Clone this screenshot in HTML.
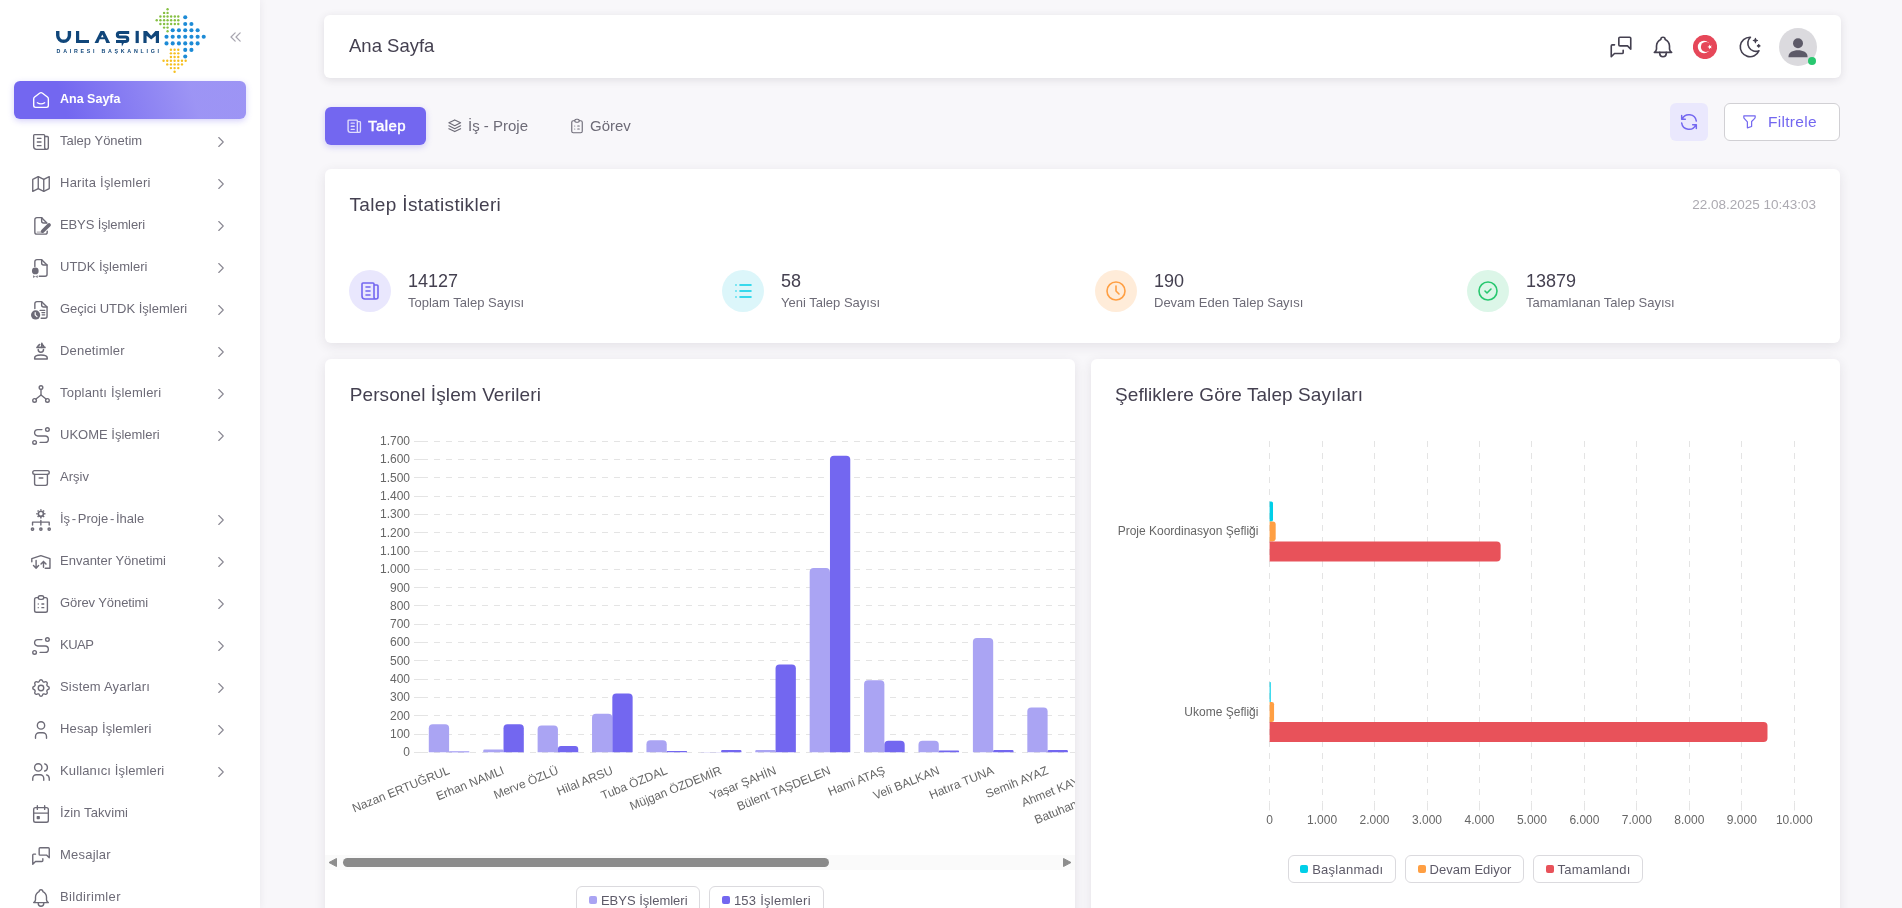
<!DOCTYPE html>
<html lang="tr">
<head>
<meta charset="utf-8">
<title>Ana Sayfa</title>
<style>
*{box-sizing:border-box;margin:0;padding:0}
html,body{width:1902px;height:908px;overflow:hidden;background:#f8f7fa;font-family:"Liberation Sans",sans-serif;color:#6d6b77}
.abs{position:absolute}
.t{position:absolute;white-space:nowrap}
svg{display:block}
.ic{position:absolute;fill:none;stroke-linecap:round;stroke-linejoin:round;overflow:visible}
.card{position:absolute;background:#fff;border-radius:6px;box-shadow:0 3px 12px rgba(47,43,61,.10)}
</style>
</head>
<body>
<div id="root" style="position:absolute;left:0;top:0;width:1902px;height:908px;overflow:hidden;will-change:transform;background:#f8f7fa">

<div class="abs" style="left:0;top:0;width:260px;height:908px;background:#fff;box-shadow:0 0 8px rgba(47,43,61,.08)"></div>
<svg class="abs" style="left:0;top:0" width="260" height="80" viewBox="0 0 260 80"><g fill="none" stroke="#10467a" stroke-linecap="butt" stroke-linejoin="miter"><path d="M57.75 30.9V35.5A5.825 5.825 0 0 0 69.4 35.5V30.9" stroke-width="3.4"/><path d="M77.6 30.9V41.5H89" stroke-width="3.2"/><path d="M129.2 32.5H119.6A2.25 2.25 0 0 0 119.6 37H125.5A2.2 2.2 0 0 1 125.5 41.45H116" stroke-width="3.1"/></g><g fill="#10467a"><path fill-rule="evenodd" d="M94.5 43.06L100.5 30.9H104.1L110.1 43.06H106.3L104.9 39.3H99.7L98.3 43.06ZM101 37.3H103.6L102.3 34.5Z"/><path d="M121.6 42.8H124L121.9 46.6Z"/><rect x="135.6" y="30.9" width="3.2" height="12.16"/><path d="M143.4 43.06V30.9H147L151.2 35.7L155.4 30.9H159V43.06H155.8V35.8L151.2 39.6L146.6 35.8V43.06Z"/></g><text x="56.6" y="53.2" font-family="Liberation Sans" font-weight="700" font-size="5.3" fill="#10467a" textLength="102.4" lengthAdjust="spacing">DAIRESI BAŞKANLIGI</text><circle cx="185.23" cy="17.30" r="2.05" fill="#1d8bd6"/><circle cx="185.23" cy="23.93" r="2.05" fill="#1d8bd6"/><circle cx="191.43" cy="23.93" r="2.05" fill="#1d8bd6"/><circle cx="172.71" cy="30.24" r="2.05" fill="#1d8bd6"/><circle cx="178.92" cy="30.24" r="2.05" fill="#1d8bd6"/><circle cx="185.23" cy="30.24" r="2.05" fill="#1d8bd6"/><circle cx="191.43" cy="30.24" r="2.05" fill="#1d8bd6"/><circle cx="197.63" cy="30.24" r="2.05" fill="#1d8bd6"/><circle cx="166.51" cy="36.76" r="2.05" fill="#1d8bd6"/><circle cx="172.71" cy="36.76" r="2.05" fill="#1d8bd6"/><circle cx="178.92" cy="36.76" r="2.05" fill="#1d8bd6"/><circle cx="185.23" cy="36.76" r="2.05" fill="#1d8bd6"/><circle cx="191.43" cy="36.76" r="2.05" fill="#1d8bd6"/><circle cx="197.63" cy="36.76" r="2.05" fill="#1d8bd6"/><circle cx="203.73" cy="36.76" r="2.05" fill="#1d8bd6"/><circle cx="166.51" cy="43.38" r="2.05" fill="#1d8bd6"/><circle cx="172.71" cy="43.38" r="2.05" fill="#1d8bd6"/><circle cx="178.92" cy="43.38" r="2.05" fill="#1d8bd6"/><circle cx="185.23" cy="43.38" r="2.05" fill="#1d8bd6"/><circle cx="191.43" cy="43.38" r="2.05" fill="#1d8bd6"/><circle cx="197.63" cy="43.38" r="2.05" fill="#1d8bd6"/><circle cx="185.23" cy="49.90" r="2.05" fill="#1d8bd6"/><circle cx="191.43" cy="49.90" r="2.05" fill="#1d8bd6"/><circle cx="185.23" cy="56.52" r="2.05" fill="#1d8bd6"/><circle cx="167.56" cy="9.21" r="1.2" fill="#86c043"/><circle cx="164.09" cy="12.89" r="1.2" fill="#86c043"/><circle cx="167.56" cy="12.89" r="1.2" fill="#86c043"/><circle cx="160.41" cy="16.57" r="1.2" fill="#86c043"/><circle cx="164.09" cy="16.57" r="1.2" fill="#86c043"/><circle cx="167.56" cy="16.57" r="1.2" fill="#86c043"/><circle cx="171.14" cy="16.57" r="1.2" fill="#86c043"/><circle cx="174.82" cy="16.57" r="1.2" fill="#86c043"/><circle cx="178.29" cy="16.57" r="1.2" fill="#86c043"/><circle cx="156.73" cy="20.25" r="1.2" fill="#86c043"/><circle cx="160.41" cy="20.25" r="1.2" fill="#86c043"/><circle cx="164.09" cy="20.25" r="1.2" fill="#86c043"/><circle cx="167.56" cy="20.25" r="1.2" fill="#86c043"/><circle cx="171.14" cy="20.25" r="1.2" fill="#86c043"/><circle cx="174.82" cy="20.25" r="1.2" fill="#86c043"/><circle cx="178.29" cy="20.25" r="1.2" fill="#86c043"/><circle cx="160.41" cy="23.93" r="1.2" fill="#86c043"/><circle cx="164.09" cy="23.93" r="1.2" fill="#86c043"/><circle cx="167.56" cy="23.93" r="1.2" fill="#86c043"/><circle cx="171.14" cy="23.93" r="1.2" fill="#86c043"/><circle cx="174.82" cy="23.93" r="1.2" fill="#86c043"/><circle cx="178.29" cy="23.93" r="1.2" fill="#86c043"/><circle cx="164.09" cy="27.61" r="1.2" fill="#86c043"/><circle cx="167.56" cy="27.61" r="1.2" fill="#86c043"/><circle cx="167.56" cy="31.29" r="1.2" fill="#86c043"/><circle cx="170.93" cy="49.69" r="1.2" fill="#f6bf1f"/><circle cx="174.61" cy="49.69" r="1.2" fill="#f6bf1f"/><circle cx="178.29" cy="49.69" r="1.2" fill="#f6bf1f"/><circle cx="170.93" cy="53.37" r="1.2" fill="#f6bf1f"/><circle cx="174.61" cy="53.37" r="1.2" fill="#f6bf1f"/><circle cx="178.29" cy="53.37" r="1.2" fill="#f6bf1f"/><circle cx="170.93" cy="57.05" r="1.2" fill="#f6bf1f"/><circle cx="174.61" cy="57.05" r="1.2" fill="#f6bf1f"/><circle cx="178.29" cy="57.05" r="1.2" fill="#f6bf1f"/><circle cx="163.56" cy="60.73" r="1.2" fill="#f6bf1f"/><circle cx="167.25" cy="60.73" r="1.2" fill="#f6bf1f"/><circle cx="170.93" cy="60.73" r="1.2" fill="#f6bf1f"/><circle cx="174.61" cy="60.73" r="1.2" fill="#f6bf1f"/><circle cx="178.29" cy="60.73" r="1.2" fill="#f6bf1f"/><circle cx="181.97" cy="60.73" r="1.2" fill="#f6bf1f"/><circle cx="185.65" cy="60.73" r="1.2" fill="#f6bf1f"/><circle cx="167.25" cy="64.41" r="1.2" fill="#f6bf1f"/><circle cx="170.93" cy="64.41" r="1.2" fill="#f6bf1f"/><circle cx="174.61" cy="64.41" r="1.2" fill="#f6bf1f"/><circle cx="178.29" cy="64.41" r="1.2" fill="#f6bf1f"/><circle cx="181.97" cy="64.41" r="1.2" fill="#f6bf1f"/><circle cx="170.93" cy="68.09" r="1.2" fill="#f6bf1f"/><circle cx="174.61" cy="68.09" r="1.2" fill="#f6bf1f"/><circle cx="178.29" cy="68.09" r="1.2" fill="#f6bf1f"/><circle cx="174.61" cy="71.77" r="1.2" fill="#f6bf1f"/></svg>
<svg class="ic" style="left:225.50px;top:27.00px;color:#a8a6b0" width="20" height="20" viewBox="0 0 24 24" stroke="currentColor" stroke-width="1.5" ><path d="M11 7l-5 5l5 5"/><path d="M17 7l-5 5l5 5"/></svg>
<div class="abs" style="left:14px;top:81px;width:232px;height:38px;border-radius:6px;background:linear-gradient(72.47deg,#7367f0 22.16%,rgba(115,103,240,.7) 76.47%);box-shadow:0 2px 6px rgba(115,103,240,.30)"></div>
<svg class="ic" style="left:30.10px;top:88.90px;color:#fff" width="22" height="22" viewBox="0 0 24 24" stroke="currentColor" stroke-width="1.5" ><path d="M19 8.71l-5.333-4.148a2.666 2.666 0 0 0-3.274 0L5.059 8.71a2.665 2.665 0 0 0-1.029 2.105v7.2a2 2 0 0 0 2 2h12a2 2 0 0 0 2-2v-7.2c0-.823-.38-1.6-1.03-2.105"/><path d="M16 15c-2.21 1.333-5.792 1.333-8 0"/></svg>
<div class="t" style="left:60.00px;top:89.60px;font-size:12.5px;line-height:18px;height:18px;color:#fff;font-weight:700;">Ana Sayfa</div>
<svg class="ic" style="left:30.10px;top:130.90px;color:#6d6b77" width="22" height="22" viewBox="0 0 24 24" stroke="currentColor" stroke-width="1.5" ><path d="M16 6h3a1 1 0 0 1 1 1v11a2 2 0 0 1-4 0v-13a1 1 0 0 0-1-1h-10a1 1 0 0 0-1 1v12a3 3 0 0 0 3 3h11"/><path d="M8 8h4M8 12h4M8 16h4"/></svg>
<div class="t" style="left:60.00px;top:131.80px;font-size:13px;line-height:18px;height:18px;color:#6d6b77;font-weight:400;">Talep Yönetim</div>
<svg class="ic" style="left:211.50px;top:132.90px;color:#8a8893" width="18" height="18" viewBox="0 0 24 24" stroke="currentColor" stroke-width="1.5" ><path d="M9 6l6 6l-6 6"/></svg>
<svg class="ic" style="left:30.10px;top:172.90px;color:#6d6b77" width="22" height="22" viewBox="0 0 24 24" stroke="currentColor" stroke-width="1.5" ><path d="M3 7l6-3l6 3l6-3v13l-6 3l-6-3l-6 3v-13"/><path d="M9 4v13M15 7v13"/></svg>
<div class="t" style="left:60.00px;top:173.80px;font-size:13px;line-height:18px;height:18px;color:#6d6b77;font-weight:400;letter-spacing:0.247px">Harita İşlemleri</div>
<svg class="ic" style="left:211.50px;top:174.90px;color:#8a8893" width="18" height="18" viewBox="0 0 24 24" stroke="currentColor" stroke-width="1.5" ><path d="M9 6l6 6l-6 6"/></svg>
<svg class="ic" style="left:30.10px;top:214.90px;color:#6d6b77" width="22" height="22" viewBox="0 0 22 22" stroke="currentColor" stroke-width="1.4"><path d="M11.64 2.66H6.85a2 2 0 0 0-2 2V17.17a2 2 0 0 0 2 2H15.2a2 2 0 0 0 2-2V16.2"/><path d="M11.64 2.66V6.06a2 2 0 0 0 2 2H16.3"/><path d="M11.64 2.66L16.9 7.9"/><path d="M7.3 17.1H11.6" opacity=".55"/><path d="M12.6 16.2L19.1 9.9" stroke-width="3.6" stroke-linecap="round"/><path d="M11.3 17.3l1.9-2.8 1.2 1.2z" fill="currentColor" stroke="none"/></svg>
<div class="t" style="left:60.00px;top:215.80px;font-size:13px;line-height:18px;height:18px;color:#6d6b77;font-weight:400;letter-spacing:-0.123px">EBYS İşlemleri</div>
<svg class="ic" style="left:211.50px;top:216.90px;color:#8a8893" width="18" height="18" viewBox="0 0 24 24" stroke="currentColor" stroke-width="1.5" ><path d="M9 6l6 6l-6 6"/></svg>
<svg class="ic" style="left:30.10px;top:256.90px;color:#6d6b77" width="22" height="22" viewBox="0 0 22 22" stroke="currentColor" stroke-width="1.4"><path d="M4.85 9.45V4.66a2 2 0 0 1 2-2H11.64L17.05 8.1V17.3a2 2 0 0 1-2 2H9.3"/><path d="M11.64 2.66V6.06a2 2 0 0 0 2 2H17"/><circle cx="5.3" cy="13.9" r="3.35" fill="currentColor" stroke="none"/><path d="M3 18.3L5.4 19.4L7.8 18.3V20.9L5.4 19.7L3 20.9Z" fill="currentColor" stroke="none" opacity=".8"/></svg>
<div class="t" style="left:60.00px;top:257.80px;font-size:13px;line-height:18px;height:18px;color:#6d6b77;font-weight:400;">UTDK İşlemleri</div>
<svg class="ic" style="left:211.50px;top:258.90px;color:#8a8893" width="18" height="18" viewBox="0 0 24 24" stroke="currentColor" stroke-width="1.5" ><path d="M9 6l6 6l-6 6"/></svg>
<svg class="ic" style="left:30.10px;top:298.90px;color:#6d6b77" width="22" height="22" viewBox="0 0 22 22" stroke="currentColor" stroke-width="1.4"><path d="M4.85 9.45V4.66a2 2 0 0 1 2-2H11.64L17.05 8.1V17.3a2 2 0 0 1-2 2H11.2"/><path d="M11.64 2.66V6.06a2 2 0 0 0 2 2H17"/><path d="M10.1 11.45H14.7M11.95 13.6H14.7M12.2 15.8H14.7" stroke-width="1.3"/><circle cx="5.62" cy="15.93" r="4.6" fill="currentColor" stroke="none"/><path d="M5.2 13.6V15.9L7 17.6" stroke="#fff" stroke-width="1.2"/></svg>
<div class="t" style="left:60.00px;top:299.80px;font-size:13px;line-height:18px;height:18px;color:#6d6b77;font-weight:400;">Geçici UTDK İşlemleri</div>
<svg class="ic" style="left:211.50px;top:300.90px;color:#8a8893" width="18" height="18" viewBox="0 0 24 24" stroke="currentColor" stroke-width="1.5" ><path d="M9 6l6 6l-6 6"/></svg>
<svg class="ic" style="left:30.10px;top:340.90px;color:#6d6b77" width="22" height="22" viewBox="0 0 22 22" stroke="currentColor" stroke-width="1.4"><path d="M7 6.4H14.9" stroke-width="1.7"/><path d="M11.8 2.3V6.4" stroke-width="1.6"/><path d="M7.6 6.2a3.9 3.9 0 0 1 2.1-2.7M14 6.2a3.9 3.9 0 0 0-2.1-2.7" stroke-width="1.5"/><path d="M8.2 8.6a2.65 2.65 0 0 0 5.3 0" stroke-width="1.5"/><path d="M4.7 18V16.7C4.7 14.6 7.6 13.9 10.9 13.9C14.2 13.9 17.2 14.6 17.2 16.7V18Z" stroke-width="1.5"/></svg>
<div class="t" style="left:60.00px;top:341.80px;font-size:13px;line-height:18px;height:18px;color:#6d6b77;font-weight:400;letter-spacing:0.178px">Denetimler</div>
<svg class="ic" style="left:211.50px;top:342.90px;color:#8a8893" width="18" height="18" viewBox="0 0 24 24" stroke="currentColor" stroke-width="1.5" ><path d="M9 6l6 6l-6 6"/></svg>
<svg class="ic" style="left:30.10px;top:382.90px;color:#6d6b77" width="22" height="22" viewBox="0 0 24 24" stroke="currentColor" stroke-width="1.5" ><path d="M12 5m-2 0a2 2 0 1 0 4 0a2 2 0 1 0-4 0"/><path d="M5 19m-2 0a2 2 0 1 0 4 0a2 2 0 1 0-4 0"/><path d="M19 19m-2 0a2 2 0 1 0 4 0a2 2 0 1 0-4 0"/><path d="M6.5 17.5l5.5-4.5l5.5 4.5"/><path d="M12 7l0 6"/></svg>
<div class="t" style="left:60.00px;top:383.80px;font-size:13px;line-height:18px;height:18px;color:#6d6b77;font-weight:400;letter-spacing:0.206px">Toplantı İşlemleri</div>
<svg class="ic" style="left:211.50px;top:384.90px;color:#8a8893" width="18" height="18" viewBox="0 0 24 24" stroke="currentColor" stroke-width="1.5" ><path d="M9 6l6 6l-6 6"/></svg>
<svg class="ic" style="left:30.10px;top:424.90px;color:#6d6b77" width="22" height="22" viewBox="0 0 24 24" stroke="currentColor" stroke-width="1.5" ><path d="M3 19a2 2 0 1 0 4 0a2 2 0 0 0-4 0"/><path d="M19 7a2 2 0 1 0 0-4a2 2 0 0 0 0 4z"/><path d="M11 19h5.5a3.5 3.5 0 0 0 0-7h-8a3.5 3.5 0 0 1 0-7h4.5"/></svg>
<div class="t" style="left:60.00px;top:425.80px;font-size:13px;line-height:18px;height:18px;color:#6d6b77;font-weight:400;">UKOME İşlemleri</div>
<svg class="ic" style="left:211.50px;top:426.90px;color:#8a8893" width="18" height="18" viewBox="0 0 24 24" stroke="currentColor" stroke-width="1.5" ><path d="M9 6l6 6l-6 6"/></svg>
<svg class="ic" style="left:30.10px;top:466.90px;color:#6d6b77" width="22" height="22" viewBox="0 0 24 24" stroke="currentColor" stroke-width="1.5" ><path d="M3 6a2 2 0 0 1 2-2h14a2 2 0 0 1 2 2v0a2 2 0 0 1-2 2h-14a2 2 0 0 1-2-2z"/><path d="M5 8v10a2 2 0 0 0 2 2h10a2 2 0 0 0 2-2v-10"/><path d="M10 12l4 0"/></svg>
<div class="t" style="left:60.00px;top:467.80px;font-size:13px;line-height:18px;height:18px;color:#6d6b77;font-weight:400;">Arşiv</div>
<svg class="ic" style="left:30.10px;top:508.90px;color:#6d6b77" width="22" height="22" viewBox="0 0 22 22" stroke="currentColor" stroke-width="1.4"><circle cx="10.87" cy="4.82" r="2.55" stroke-width="1.6"/><path d="M14.07 4.82L15.47 4.82" stroke-width="1.5" stroke-linecap="butt"/><path d="M13.13 7.08L14.12 8.07" stroke-width="1.5" stroke-linecap="butt"/><path d="M10.87 8.02L10.87 9.42" stroke-width="1.5" stroke-linecap="butt"/><path d="M8.61 7.08L7.62 8.07" stroke-width="1.5" stroke-linecap="butt"/><path d="M7.67 4.82L6.27 4.82" stroke-width="1.5" stroke-linecap="butt"/><path d="M8.61 2.56L7.62 1.57" stroke-width="1.5" stroke-linecap="butt"/><path d="M10.87 1.62L10.87 0.22" stroke-width="1.5" stroke-linecap="butt"/><path d="M13.13 2.56L14.12 1.57" stroke-width="1.5" stroke-linecap="butt"/><path d="M2.54 16.1V13.15H19.2V16.1M10.87 11.45V16.1"/><circle cx="2.54" cy="20.1" r="1.15" stroke-width="1.4"/><circle cx="10.87" cy="20.1" r="1.15" stroke-width="1.4"/><circle cx="19.2" cy="20.1" r="1.15" stroke-width="1.4"/></svg>
<div class="t" style="left:60.00px;top:509.80px;font-size:13px;line-height:18px;height:18px;color:#6d6b77;font-weight:400;word-spacing:-1.9px">İş - Proje - İhale</div>
<svg class="ic" style="left:211.50px;top:510.90px;color:#8a8893" width="18" height="18" viewBox="0 0 24 24" stroke="currentColor" stroke-width="1.5" ><path d="M9 6l6 6l-6 6"/></svg>
<svg class="ic" style="left:30.10px;top:550.90px;color:#6d6b77" width="22" height="22" viewBox="0 0 22 22" stroke="currentColor" stroke-width="1.4"><path d="M1.8 10.7V7.6L10.87 4.66L19.97 7.6V17.3H15.2"/><path d="M6.1 9.45V17.2M3.5 14.5L6.1 17.2L8.6 14.5"/><path d="M13.5 16.2V10.4M11 13L13.5 10.4L16 13"/></svg>
<div class="t" style="left:60.00px;top:551.80px;font-size:13px;line-height:18px;height:18px;color:#6d6b77;font-weight:400;">Envanter Yönetimi</div>
<svg class="ic" style="left:211.50px;top:552.90px;color:#8a8893" width="18" height="18" viewBox="0 0 24 24" stroke="currentColor" stroke-width="1.5" ><path d="M9 6l6 6l-6 6"/></svg>
<svg class="ic" style="left:30.10px;top:592.90px;color:#6d6b77" width="22" height="22" viewBox="0 0 24 24" stroke="currentColor" stroke-width="1.5" ><path d="M9 5h-2a2 2 0 0 0-2 2v12a2 2 0 0 0 2 2h10a2 2 0 0 0 2-2v-12a2 2 0 0 0-2-2h-2"/><path d="M9 5a2 2 0 0 1 2-2h2a2 2 0 0 1 2 2a2 2 0 0 1-2 2h-2a2 2 0 0 1-2-2z"/><path d="M9 12h.01M13 12h2M9 16h.01M13 16h2"/></svg>
<div class="t" style="left:60.00px;top:593.80px;font-size:13px;line-height:18px;height:18px;color:#6d6b77;font-weight:400;letter-spacing:-0.085px">Görev Yönetimi</div>
<svg class="ic" style="left:211.50px;top:594.90px;color:#8a8893" width="18" height="18" viewBox="0 0 24 24" stroke="currentColor" stroke-width="1.5" ><path d="M9 6l6 6l-6 6"/></svg>
<svg class="ic" style="left:30.10px;top:634.90px;color:#6d6b77" width="22" height="22" viewBox="0 0 24 24" stroke="currentColor" stroke-width="1.5" ><path d="M3 19a2 2 0 1 0 4 0a2 2 0 0 0-4 0"/><path d="M19 7a2 2 0 1 0 0-4a2 2 0 0 0 0 4z"/><path d="M11 19h5.5a3.5 3.5 0 0 0 0-7h-8a3.5 3.5 0 0 1 0-7h4.5"/></svg>
<div class="t" style="left:60.00px;top:635.80px;font-size:13px;line-height:18px;height:18px;color:#6d6b77;font-weight:400;letter-spacing:-0.533px">KUAP</div>
<svg class="ic" style="left:211.50px;top:636.90px;color:#8a8893" width="18" height="18" viewBox="0 0 24 24" stroke="currentColor" stroke-width="1.5" ><path d="M9 6l6 6l-6 6"/></svg>
<svg class="ic" style="left:30.10px;top:676.90px;color:#6d6b77" width="22" height="22" viewBox="0 0 24 24" stroke="currentColor" stroke-width="1.5" ><path d="M10.325 4.317c.426-1.756 2.924-1.756 3.35 0a1.724 1.724 0 0 0 2.573 1.066c1.543-.94 3.31.826 2.37 2.37a1.724 1.724 0 0 0 1.065 2.572c1.756.426 1.756 2.924 0 3.35a1.724 1.724 0 0 0-1.066 2.573c.94 1.543-.826 3.31-2.37 2.37a1.724 1.724 0 0 0-2.572 1.065c-.426 1.756-2.924 1.756-3.35 0a1.724 1.724 0 0 0-2.573-1.066c-1.543.94-3.31-.826-2.37-2.37a1.724 1.724 0 0 0-1.065-2.572c-1.756-.426-1.756-2.924 0-3.35a1.724 1.724 0 0 0 1.066-2.573c-.94-1.543.826-3.31 2.37-2.37c1 .608 2.296.07 2.572-1.065z"/><circle cx="12" cy="12" r="3"/></svg>
<div class="t" style="left:60.00px;top:677.80px;font-size:13px;line-height:18px;height:18px;color:#6d6b77;font-weight:400;letter-spacing:0.193px">Sistem Ayarları</div>
<svg class="ic" style="left:211.50px;top:678.90px;color:#8a8893" width="18" height="18" viewBox="0 0 24 24" stroke="currentColor" stroke-width="1.5" ><path d="M9 6l6 6l-6 6"/></svg>
<svg class="ic" style="left:30.10px;top:718.90px;color:#6d6b77" width="22" height="22" viewBox="0 0 24 24" stroke="currentColor" stroke-width="1.5" ><circle cx="12" cy="7" r="4"/><path d="M6 21v-2a4 4 0 0 1 4-4h4a4 4 0 0 1 4 4v2"/></svg>
<div class="t" style="left:60.00px;top:719.80px;font-size:13px;line-height:18px;height:18px;color:#6d6b77;font-weight:400;letter-spacing:0.129px">Hesap İşlemleri</div>
<svg class="ic" style="left:211.50px;top:720.90px;color:#8a8893" width="18" height="18" viewBox="0 0 24 24" stroke="currentColor" stroke-width="1.5" ><path d="M9 6l6 6l-6 6"/></svg>
<svg class="ic" style="left:30.10px;top:760.90px;color:#6d6b77" width="22" height="22" viewBox="0 0 24 24" stroke="currentColor" stroke-width="1.5" ><circle cx="9" cy="7" r="4"/><path d="M3 21v-2a4 4 0 0 1 4-4h4a4 4 0 0 1 4 4v2"/><path d="M16 3.13a4 4 0 0 1 0 7.75"/><path d="M21 21v-2a4 4 0 0 0-3-3.85"/></svg>
<div class="t" style="left:60.00px;top:761.80px;font-size:13px;line-height:18px;height:18px;color:#6d6b77;font-weight:400;letter-spacing:0.133px">Kullanıcı İşlemleri</div>
<svg class="ic" style="left:211.50px;top:762.90px;color:#8a8893" width="18" height="18" viewBox="0 0 24 24" stroke="currentColor" stroke-width="1.5" ><path d="M9 6l6 6l-6 6"/></svg>
<svg class="ic" style="left:30.10px;top:802.90px;color:#6d6b77" width="22" height="22" viewBox="0 0 24 24" stroke="currentColor" stroke-width="1.5" ><path d="M4 7a2 2 0 0 1 2-2h12a2 2 0 0 1 2 2v12a2 2 0 0 1-2 2h-12a2 2 0 0 1-2-2v-12z"/><path d="M16 3v4M8 3v4M4 11h16"/><path d="M8 15h2v2h-2z" fill="currentColor"/></svg>
<div class="t" style="left:60.00px;top:803.80px;font-size:13px;line-height:18px;height:18px;color:#6d6b77;font-weight:400;letter-spacing:0.091px">İzin Takvimi</div>
<svg class="ic" style="left:30.10px;top:844.90px;color:#6d6b77" width="22" height="22" viewBox="0 0 24 24" stroke="currentColor" stroke-width="1.5" ><path d="M21 14l-3-3h-7a1 1 0 0 1-1-1v-6a1 1 0 0 1 1-1h9a1 1 0 0 1 1 1v10"/><path d="M14 15v2a1 1 0 0 1-1 1h-7l-3 3v-10a1 1 0 0 1 1-1h2"/></svg>
<div class="t" style="left:60.00px;top:845.80px;font-size:13px;line-height:18px;height:18px;color:#6d6b77;font-weight:400;letter-spacing:0.214px">Mesajlar</div>
<svg class="ic" style="left:30.10px;top:886.90px;color:#6d6b77" width="22" height="22" viewBox="0 0 24 24" stroke="currentColor" stroke-width="1.5" ><path d="M10 5a2 2 0 1 1 4 0a7 7 0 0 1 4 6v3a4 4 0 0 0 2 3h-16a4 4 0 0 0 2-3v-3a7 7 0 0 1 4-6"/><path d="M9 17v1a3 3 0 0 0 6 0v-1"/></svg>
<div class="t" style="left:60.00px;top:887.80px;font-size:13px;line-height:18px;height:18px;color:#6d6b77;font-weight:400;letter-spacing:0.34px">Bildirimler</div>
<div class="card" style="left:324px;top:15px;width:1517px;height:63px;box-shadow:0 2px 8px rgba(47,43,61,.12)"></div>
<div class="t" style="left:349.00px;top:33.40px;font-size:18.5px;line-height:26px;height:26px;color:#444050;font-weight:400;">Ana Sayfa</div>
<svg class="ic" style="left:1607.75px;top:33.95px;color:#444050" width="26" height="26" viewBox="0 0 24 24" stroke="currentColor" stroke-width="1.5" ><path d="M21 14l-3-3h-7a1 1 0 0 1-1-1v-6a1 1 0 0 1 1-1h9a1 1 0 0 1 1 1v10"/><path d="M14 15v2a1 1 0 0 1-1 1h-7l-3 3v-10a1 1 0 0 1 1-1h2"/></svg>
<svg class="ic" style="left:1649.80px;top:33.90px;color:#444050" width="26" height="26" viewBox="0 0 24 24" stroke="currentColor" stroke-width="1.5" ><path d="M10 5a2 2 0 1 1 4 0a7 7 0 0 1 4 6v3a4 4 0 0 0 2 3h-16a4 4 0 0 0 2-3v-3a7 7 0 0 1 4-6"/><path d="M9 17v1a3 3 0 0 0 6 0v-1"/></svg>
<svg class="abs" style="left:1693px;top:35px" width="24" height="24" viewBox="0 0 24 24"><circle cx="12" cy="12" r="12.1" fill="#e64759"/><circle cx="11" cy="12" r="6.2" fill="#fff"/><circle cx="12.9" cy="11.9" r="5.0" fill="#e64759"/><path fill="#fff" d="M14.30 11.90L15.95 11.28L16.03 9.52L17.12 10.90L18.82 10.43L17.85 11.90L18.82 13.37L17.12 12.90L16.03 14.28L15.95 12.52Z"/></svg>
<svg class="ic" style="left:1736.50px;top:33.70px;color:#444050" width="26" height="26" viewBox="0 0 24 24" stroke="currentColor" stroke-width="1.5" ><path d="M12 3c.132 0 .263 0 .393 0a7.5 7.5 0 0 0 7.92 12.446a9 9 0 1 1-8.313-12.454z"/><path d="M17 4a2 2 0 0 0 2 2a2 2 0 0 0-2 2a2 2 0 0 0-2-2a2 2 0 0 0 2-2" fill="currentColor" stroke-width="1"/><path d="M19 11h2m-1-1v2" /></svg>
<div class="abs" style="left:1779px;top:28px;width:38px;height:38px;border-radius:50%;background:#dbdade"></div>
<svg class="abs" style="left:1779px;top:28px" width="38" height="38" viewBox="0 0 38 38"><circle cx="19" cy="15.2" r="5" fill="#5d5a68"/><path d="M9.5 28.5 c0-4.2 4.3-6.3 9.5-6.3 s9.5 2.1 9.5 6.3 v0.8 h-19z" fill="#5d5a68"/></svg>
<div class="abs" style="left:1807.8px;top:57.1px;width:8.2px;height:8.2px;border-radius:50%;background:#28c76f"></div>
<div class="abs" style="left:325px;top:107px;width:101px;height:38px;border-radius:6px;background:#7367f0;box-shadow:0 2px 6px rgba(115,103,240,.3)"></div>
<svg class="ic" style="left:344.95px;top:116.85px;color:rgba(255,255,255,.78)" width="18.5" height="18.5" viewBox="0 0 24 24" stroke="currentColor" stroke-width="1.8" ><path d="M16 6h3a1 1 0 0 1 1 1v11a2 2 0 0 1-4 0v-13a1 1 0 0 0-1-1h-10a1 1 0 0 0-1 1v12a3 3 0 0 0 3 3h11"/><path d="M8 8h4M8 12h4M8 16h4"/></svg>
<div class="t" style="left:368.00px;top:114.80px;font-size:15px;line-height:21px;height:21px;color:#fff;font-weight:400;letter-spacing:.45px;-webkit-text-stroke:.45px #fff">Talep</div>
<svg class="ic" style="left:446.25px;top:116.95px;color:#6d6b77" width="17.5" height="17.5" viewBox="0 0 24 24" stroke="currentColor" stroke-width="1.6" ><path d="M12 4l-8 4l8 4l8-4l-8-4"/><path d="M4 12l8 4l8-4"/><path d="M4 16l8 4l8-4"/></svg>
<div class="t" style="left:468.00px;top:114.80px;font-size:15px;line-height:21px;height:21px;color:#6d6b77;font-weight:400;">İş - Proje</div>
<svg class="ic" style="left:567.90px;top:116.70px;color:#6d6b77" width="18" height="18" viewBox="0 0 24 24" stroke="currentColor" stroke-width="1.5" ><path d="M9 5h-2a2 2 0 0 0-2 2v12a2 2 0 0 0 2 2h10a2 2 0 0 0 2-2v-12a2 2 0 0 0-2-2h-2"/><path d="M9 5a2 2 0 0 1 2-2h2a2 2 0 0 1 2 2a2 2 0 0 1-2 2h-2a2 2 0 0 1-2-2z"/><path d="M9 12h.01M13 12h2M9 16h.01M13 16h2"/></svg>
<div class="t" style="left:590.00px;top:114.80px;font-size:15px;line-height:21px;height:21px;color:#6d6b77;font-weight:400;">Görev</div>
<div class="abs" style="left:1670px;top:103px;width:38px;height:38px;border-radius:6px;background:#eae8fd"></div>
<svg class="ic" style="left:1678.20px;top:111.10px;color:#7367f0" width="22" height="22" viewBox="0 0 24 24" stroke="currentColor" stroke-width="1.6" ><path d="M20 11a8.1 8.1 0 0 0-15.5-2m-.5-4v4h4"/><path d="M4 13a8.1 8.1 0 0 0 15.5 2m.5 4v-4h-4"/></svg>
<div class="abs" style="left:1724px;top:103px;width:116px;height:38px;border-radius:6px;background:#fff;border:1px solid #d1d0d4"></div>
<svg class="ic" style="left:1741.20px;top:113.30px;color:#7367f0" width="17" height="17" viewBox="0 0 24 24" stroke="currentColor" stroke-width="1.7" ><path d="M4 4h16v2.172a2 2 0 0 1-.586 1.414l-4.414 4.414v7l-6 2v-8.5l-4.48-4.928a2 2 0 0 1-.52-1.345v-2.227z"/></svg>
<div class="t" style="left:1768.00px;top:111.00px;font-size:15.5px;line-height:22px;height:22px;color:#7367f0;font-weight:400;letter-spacing:.3px">Filtrele</div>
<div class="card" style="left:325px;top:169px;width:1515px;height:174px"></div>
<div class="t" style="left:349.50px;top:190.90px;font-size:19px;line-height:27px;height:27px;color:#444050;font-weight:400;letter-spacing:.35px">Talep İstatistikleri</div>
<div class="t" style="right:86.00px;top:195.10px;font-size:13.5px;line-height:19px;height:19px;color:#acaab1;font-weight:400;">22.08.2025 10:43:03</div>
<div class="abs" style="left:349px;top:270px;width:42px;height:42px;border-radius:50%;background:#e9e7fd"></div>
<svg class="ic" style="left:358.00px;top:279.00px;color:#7367f0" width="24" height="24" viewBox="0 0 24 24" stroke="currentColor" stroke-width="1.6" ><path d="M16 6h3a1 1 0 0 1 1 1v11a2 2 0 0 1-4 0v-13a1 1 0 0 0-1-1h-10a1 1 0 0 0-1 1v12a3 3 0 0 0 3 3h11"/><path d="M8 8h4M8 12h4M8 16h4"/></svg>
<div class="t" style="left:408.00px;top:268.80px;font-size:18px;line-height:25px;height:25px;color:#444050;font-weight:400;">14127</div>
<div class="t" style="left:408.00px;top:294.10px;font-size:13px;line-height:18px;height:18px;color:#6d6b77;font-weight:400;">Toplam Talep Sayısı</div>
<div class="abs" style="left:722px;top:270px;width:42px;height:42px;border-radius:50%;background:#dcf6fa"></div>
<svg class="ic" style="left:731.00px;top:279.00px;color:#00cfe8" width="24" height="24" viewBox="0 0 24 24" stroke="currentColor" stroke-width="1.6" ><path d="M9 6h11M9 12h11M9 18h11M5 6v.01M5 12v.01M5 18v.01"/></svg>
<div class="t" style="left:781.00px;top:268.80px;font-size:18px;line-height:25px;height:25px;color:#444050;font-weight:400;">58</div>
<div class="t" style="left:781.00px;top:294.10px;font-size:13px;line-height:18px;height:18px;color:#6d6b77;font-weight:400;">Yeni Talep Sayısı</div>
<div class="abs" style="left:1095px;top:270px;width:42px;height:42px;border-radius:50%;background:#ffecd9"></div>
<svg class="ic" style="left:1104.00px;top:279.00px;color:#ff9f43" width="24" height="24" viewBox="0 0 24 24" stroke="currentColor" stroke-width="1.6" ><circle cx="12" cy="12" r="9"/><path d="M12 7v5l3 3"/></svg>
<div class="t" style="left:1154.00px;top:268.80px;font-size:18px;line-height:25px;height:25px;color:#444050;font-weight:400;">190</div>
<div class="t" style="left:1154.00px;top:294.10px;font-size:13px;line-height:18px;height:18px;color:#6d6b77;font-weight:400;">Devam Eden Talep Sayısı</div>
<div class="abs" style="left:1467px;top:270px;width:42px;height:42px;border-radius:50%;background:#dcf6e8"></div>
<svg class="ic" style="left:1476.00px;top:279.00px;color:#28c76f" width="24" height="24" viewBox="0 0 24 24" stroke="currentColor" stroke-width="1.6" ><circle cx="12" cy="12" r="9"/><path d="M9 12l2 2l4-4"/></svg>
<div class="t" style="left:1526.00px;top:268.80px;font-size:18px;line-height:25px;height:25px;color:#444050;font-weight:400;">13879</div>
<div class="t" style="left:1526.00px;top:294.10px;font-size:13px;line-height:18px;height:18px;color:#6d6b77;font-weight:400;">Tamamlanan Talep Sayısı</div>
<div class="card" style="left:325px;top:359px;width:750px;height:600px"></div>
<div class="card" style="left:1091px;top:359px;width:749px;height:600px"></div>
<div class="t" style="left:349.70px;top:381.10px;font-size:19px;line-height:27px;height:27px;color:#444050;font-weight:400;letter-spacing:.1px">Personel İşlem Verileri</div>
<div class="t" style="left:1115.00px;top:381.10px;font-size:19px;line-height:27px;height:27px;color:#444050;font-weight:400;letter-spacing:.08px">Şefliklere Göre Talep Sayıları</div>
<svg class="abs" style="left:0;top:0" width="1902" height="908" viewBox="0 0 1902 908" font-family="Liberation Sans" font-size="12"><defs><clipPath id="cl"><rect x="325" y="359" width="750" height="600"/></clipPath></defs><g clip-path="url(#cl)"><line x1="414" y1="752.5" x2="422" y2="752.5" stroke="#e4e4e4" stroke-width="1"/><line x1="422" y1="752.5" x2="1075" y2="752.5" stroke="#e4e4e4" stroke-width="1" stroke-dasharray="6 6"/><text x="410" y="756.20" text-anchor="end" fill="#666">0</text><line x1="414" y1="734.5" x2="422" y2="734.5" stroke="#e4e4e4" stroke-width="1"/><line x1="422" y1="734.5" x2="1075" y2="734.5" stroke="#e4e4e4" stroke-width="1" stroke-dasharray="6 6"/><text x="410" y="737.91" text-anchor="end" fill="#666">100</text><line x1="414" y1="715.5" x2="422" y2="715.5" stroke="#e4e4e4" stroke-width="1"/><line x1="422" y1="715.5" x2="1075" y2="715.5" stroke="#e4e4e4" stroke-width="1" stroke-dasharray="6 6"/><text x="410" y="719.61" text-anchor="end" fill="#666">200</text><line x1="414" y1="697.5" x2="422" y2="697.5" stroke="#e4e4e4" stroke-width="1"/><line x1="422" y1="697.5" x2="1075" y2="697.5" stroke="#e4e4e4" stroke-width="1" stroke-dasharray="6 6"/><text x="410" y="701.32" text-anchor="end" fill="#666">300</text><line x1="414" y1="679.5" x2="422" y2="679.5" stroke="#e4e4e4" stroke-width="1"/><line x1="422" y1="679.5" x2="1075" y2="679.5" stroke="#e4e4e4" stroke-width="1" stroke-dasharray="6 6"/><text x="410" y="683.02" text-anchor="end" fill="#666">400</text><line x1="414" y1="660.5" x2="422" y2="660.5" stroke="#e4e4e4" stroke-width="1"/><line x1="422" y1="660.5" x2="1075" y2="660.5" stroke="#e4e4e4" stroke-width="1" stroke-dasharray="6 6"/><text x="410" y="664.73" text-anchor="end" fill="#666">500</text><line x1="414" y1="642.5" x2="422" y2="642.5" stroke="#e4e4e4" stroke-width="1"/><line x1="422" y1="642.5" x2="1075" y2="642.5" stroke="#e4e4e4" stroke-width="1" stroke-dasharray="6 6"/><text x="410" y="646.44" text-anchor="end" fill="#666">600</text><line x1="414" y1="624.5" x2="422" y2="624.5" stroke="#e4e4e4" stroke-width="1"/><line x1="422" y1="624.5" x2="1075" y2="624.5" stroke="#e4e4e4" stroke-width="1" stroke-dasharray="6 6"/><text x="410" y="628.14" text-anchor="end" fill="#666">700</text><line x1="414" y1="605.5" x2="422" y2="605.5" stroke="#e4e4e4" stroke-width="1"/><line x1="422" y1="605.5" x2="1075" y2="605.5" stroke="#e4e4e4" stroke-width="1" stroke-dasharray="6 6"/><text x="410" y="609.85" text-anchor="end" fill="#666">800</text><line x1="414" y1="587.5" x2="422" y2="587.5" stroke="#e4e4e4" stroke-width="1"/><line x1="422" y1="587.5" x2="1075" y2="587.5" stroke="#e4e4e4" stroke-width="1" stroke-dasharray="6 6"/><text x="410" y="591.55" text-anchor="end" fill="#666">900</text><line x1="414" y1="569.5" x2="422" y2="569.5" stroke="#e4e4e4" stroke-width="1"/><line x1="422" y1="569.5" x2="1075" y2="569.5" stroke="#e4e4e4" stroke-width="1" stroke-dasharray="6 6"/><text x="410" y="573.26" text-anchor="end" fill="#666">1.000</text><line x1="414" y1="551.5" x2="422" y2="551.5" stroke="#e4e4e4" stroke-width="1"/><line x1="422" y1="551.5" x2="1075" y2="551.5" stroke="#e4e4e4" stroke-width="1" stroke-dasharray="6 6"/><text x="410" y="554.96" text-anchor="end" fill="#666">1.100</text><line x1="414" y1="532.5" x2="422" y2="532.5" stroke="#e4e4e4" stroke-width="1"/><line x1="422" y1="532.5" x2="1075" y2="532.5" stroke="#e4e4e4" stroke-width="1" stroke-dasharray="6 6"/><text x="410" y="536.67" text-anchor="end" fill="#666">1.200</text><line x1="414" y1="514.5" x2="422" y2="514.5" stroke="#e4e4e4" stroke-width="1"/><line x1="422" y1="514.5" x2="1075" y2="514.5" stroke="#e4e4e4" stroke-width="1" stroke-dasharray="6 6"/><text x="410" y="518.38" text-anchor="end" fill="#666">1.300</text><line x1="414" y1="496.5" x2="422" y2="496.5" stroke="#e4e4e4" stroke-width="1"/><line x1="422" y1="496.5" x2="1075" y2="496.5" stroke="#e4e4e4" stroke-width="1" stroke-dasharray="6 6"/><text x="410" y="500.08" text-anchor="end" fill="#666">1.400</text><line x1="414" y1="477.5" x2="422" y2="477.5" stroke="#e4e4e4" stroke-width="1"/><line x1="422" y1="477.5" x2="1075" y2="477.5" stroke="#e4e4e4" stroke-width="1" stroke-dasharray="6 6"/><text x="410" y="481.79" text-anchor="end" fill="#666">1.500</text><line x1="414" y1="459.5" x2="422" y2="459.5" stroke="#e4e4e4" stroke-width="1"/><line x1="422" y1="459.5" x2="1075" y2="459.5" stroke="#e4e4e4" stroke-width="1" stroke-dasharray="6 6"/><text x="410" y="463.49" text-anchor="end" fill="#666">1.600</text><line x1="414" y1="441.5" x2="422" y2="441.5" stroke="#e4e4e4" stroke-width="1"/><line x1="422" y1="441.5" x2="1075" y2="441.5" stroke="#e4e4e4" stroke-width="1" stroke-dasharray="6 6"/><text x="410" y="445.20" text-anchor="end" fill="#666">1.700</text><path d="M428.80 752.30V728.31Q428.80 724.31 432.80 724.31H445.10Q449.10 724.31 449.10 728.31V752.30Z" fill="#aaa4f3"/><path d="M449.10 752.30V751.84Q449.10 751.39 449.56 751.39H468.94Q469.40 751.39 469.40 751.84V752.30Z" fill="#7367f0"/><path d="M483.21 752.30V750.93Q483.21 749.56 484.58 749.56H502.14Q503.51 749.56 503.51 750.93V752.30Z" fill="#aaa4f3"/><path d="M503.51 752.30V728.31Q503.51 724.31 507.51 724.31H519.81Q523.81 724.31 523.81 728.31V752.30Z" fill="#7367f0"/><path d="M537.62 752.30V729.41Q537.62 725.41 541.62 725.41H553.92Q557.92 725.41 557.92 729.41V752.30Z" fill="#aaa4f3"/><path d="M557.92 752.30V749.19Q557.92 746.08 561.03 746.08H575.11Q578.22 746.08 578.22 749.19V752.30Z" fill="#7367f0"/><path d="M592.03 752.30V717.70Q592.03 713.70 596.03 713.70H608.33Q612.33 713.70 612.33 717.70V752.30Z" fill="#aaa4f3"/><path d="M612.33 752.30V697.39Q612.33 693.39 616.33 693.39H628.63Q632.63 693.39 632.63 697.39V752.30Z" fill="#7367f0"/><path d="M646.44 752.30V744.23Q646.44 740.23 650.44 740.23H662.74Q666.74 740.23 666.74 744.23V752.30Z" fill="#aaa4f3"/><path d="M666.74 752.30V751.66Q666.74 751.02 667.38 751.02H686.40Q687.04 751.02 687.04 751.66V752.30Z" fill="#7367f0"/><path d="M700.85 752.30V752.12Q700.85 751.93 701.03 751.93H720.97Q721.15 751.93 721.15 752.12V752.30Z" fill="#aaa4f3"/><path d="M721.15 752.30V751.11Q721.15 749.92 722.34 749.92H740.26Q741.45 749.92 741.45 751.11V752.30Z" fill="#7367f0"/><path d="M755.26 752.30V751.20Q755.26 750.10 756.36 750.10H774.46Q775.56 750.10 775.56 751.20V752.30Z" fill="#aaa4f3"/><path d="M775.56 752.30V668.49Q775.56 664.49 779.56 664.49H791.86Q795.86 664.49 795.86 668.49V752.30Z" fill="#7367f0"/><path d="M809.67 752.30V572.08Q809.67 568.08 813.67 568.08H825.97Q829.97 568.08 829.97 572.08V752.30Z" fill="#aaa4f3"/><path d="M829.97 752.30V459.75Q829.97 455.75 833.97 455.75H846.27Q850.27 455.75 850.27 459.75V752.30Z" fill="#7367f0"/><path d="M864.08 752.30V684.22Q864.08 680.22 868.08 680.22H880.38Q884.38 680.22 884.38 684.22V752.30Z" fill="#aaa4f3"/><path d="M884.38 752.30V744.77Q884.38 740.77 888.38 740.77H900.68Q904.68 740.77 904.68 744.77V752.30Z" fill="#7367f0"/><path d="M918.49 752.30V744.77Q918.49 740.77 922.49 740.77H934.79Q938.79 740.77 938.79 744.77V752.30Z" fill="#aaa4f3"/><path d="M938.79 752.30V751.39Q938.79 750.47 939.70 750.47H958.18Q959.09 750.47 959.09 751.39V752.30Z" fill="#7367f0"/><path d="M972.90 752.30V641.96Q972.90 637.96 976.90 637.96H989.20Q993.20 637.96 993.20 641.96V752.30Z" fill="#aaa4f3"/><path d="M993.20 752.30V751.20Q993.20 750.10 994.30 750.10H1012.40Q1013.50 750.10 1013.50 751.20V752.30Z" fill="#7367f0"/><path d="M1027.31 752.30V711.48Q1027.31 707.48 1031.31 707.48H1043.61Q1047.61 707.48 1047.61 711.48V752.30Z" fill="#aaa4f3"/><path d="M1047.61 752.30V751.20Q1047.61 750.10 1048.71 750.10H1066.81Q1067.91 750.10 1067.91 751.20V752.30Z" fill="#7367f0"/><text transform="translate(449.10 770) rotate(-22)" x="0" y="3.8" text-anchor="end" fill="#666">Nazan ERTUĞRUL</text><text transform="translate(503.51 770) rotate(-22)" x="0" y="3.8" text-anchor="end" fill="#666">Erhan NAMLI</text><text transform="translate(557.92 770) rotate(-22)" x="0" y="3.8" text-anchor="end" fill="#666">Merve ÖZLÜ</text><text transform="translate(612.33 770) rotate(-22)" x="0" y="3.8" text-anchor="end" fill="#666">Hilal ARSU</text><text transform="translate(666.74 770) rotate(-22)" x="0" y="3.8" text-anchor="end" fill="#666">Tuba ÖZDAL</text><text transform="translate(721.15 770) rotate(-22)" x="0" y="3.8" text-anchor="end" fill="#666">Müjgan ÖZDEMİR</text><text transform="translate(775.56 770) rotate(-22)" x="0" y="3.8" text-anchor="end" fill="#666">Yaşar ŞAHİN</text><text transform="translate(829.97 770) rotate(-22)" x="0" y="3.8" text-anchor="end" fill="#666">Bülent TAŞDELEN</text><text transform="translate(884.38 770) rotate(-22)" x="0" y="3.8" text-anchor="end" fill="#666">Hami ATAŞ</text><text transform="translate(938.79 770) rotate(-22)" x="0" y="3.8" text-anchor="end" fill="#666">Veli BALKAN</text><text transform="translate(993.20 770) rotate(-22)" x="0" y="3.8" text-anchor="end" fill="#666">Hatıra TUNA</text><text transform="translate(1047.61 770) rotate(-22)" x="0" y="3.8" text-anchor="end" fill="#666">Semih AYAZ</text><text transform="translate(1023.5 807.1) rotate(-22)" x="0" y="0" fill="#666">Ahmet KAYABAŞI</text><text transform="translate(1036.6 824.0) rotate(-22)" x="0" y="0" fill="#666">Batuhan KARAKAYALI</text></g><line x1="1269.5" y1="441" x2="1269.5" y2="802.5" stroke="#e4e4e4" stroke-width="1" stroke-dasharray="6 6"/><line x1="1269.5" y1="802.5" x2="1269.5" y2="810.5" stroke="#e4e4e4" stroke-width="1"/><text x="1269.60" y="824.3" text-anchor="middle" fill="#666">0</text><line x1="1322.5" y1="441" x2="1322.5" y2="802.5" stroke="#e4e4e4" stroke-width="1" stroke-dasharray="6 6"/><line x1="1322.5" y1="802.5" x2="1322.5" y2="810.5" stroke="#e4e4e4" stroke-width="1"/><text x="1322.07" y="824.3" text-anchor="middle" fill="#666">1.000</text><line x1="1374.5" y1="441" x2="1374.5" y2="802.5" stroke="#e4e4e4" stroke-width="1" stroke-dasharray="6 6"/><line x1="1374.5" y1="802.5" x2="1374.5" y2="810.5" stroke="#e4e4e4" stroke-width="1"/><text x="1374.54" y="824.3" text-anchor="middle" fill="#666">2.000</text><line x1="1427.5" y1="441" x2="1427.5" y2="802.5" stroke="#e4e4e4" stroke-width="1" stroke-dasharray="6 6"/><line x1="1427.5" y1="802.5" x2="1427.5" y2="810.5" stroke="#e4e4e4" stroke-width="1"/><text x="1427.01" y="824.3" text-anchor="middle" fill="#666">3.000</text><line x1="1479.5" y1="441" x2="1479.5" y2="802.5" stroke="#e4e4e4" stroke-width="1" stroke-dasharray="6 6"/><line x1="1479.5" y1="802.5" x2="1479.5" y2="810.5" stroke="#e4e4e4" stroke-width="1"/><text x="1479.48" y="824.3" text-anchor="middle" fill="#666">4.000</text><line x1="1531.5" y1="441" x2="1531.5" y2="802.5" stroke="#e4e4e4" stroke-width="1" stroke-dasharray="6 6"/><line x1="1531.5" y1="802.5" x2="1531.5" y2="810.5" stroke="#e4e4e4" stroke-width="1"/><text x="1531.95" y="824.3" text-anchor="middle" fill="#666">5.000</text><line x1="1584.5" y1="441" x2="1584.5" y2="802.5" stroke="#e4e4e4" stroke-width="1" stroke-dasharray="6 6"/><line x1="1584.5" y1="802.5" x2="1584.5" y2="810.5" stroke="#e4e4e4" stroke-width="1"/><text x="1584.42" y="824.3" text-anchor="middle" fill="#666">6.000</text><line x1="1636.5" y1="441" x2="1636.5" y2="802.5" stroke="#e4e4e4" stroke-width="1" stroke-dasharray="6 6"/><line x1="1636.5" y1="802.5" x2="1636.5" y2="810.5" stroke="#e4e4e4" stroke-width="1"/><text x="1636.89" y="824.3" text-anchor="middle" fill="#666">7.000</text><line x1="1689.5" y1="441" x2="1689.5" y2="802.5" stroke="#e4e4e4" stroke-width="1" stroke-dasharray="6 6"/><line x1="1689.5" y1="802.5" x2="1689.5" y2="810.5" stroke="#e4e4e4" stroke-width="1"/><text x="1689.36" y="824.3" text-anchor="middle" fill="#666">8.000</text><line x1="1741.5" y1="441" x2="1741.5" y2="802.5" stroke="#e4e4e4" stroke-width="1" stroke-dasharray="6 6"/><line x1="1741.5" y1="802.5" x2="1741.5" y2="810.5" stroke="#e4e4e4" stroke-width="1"/><text x="1741.83" y="824.3" text-anchor="middle" fill="#666">9.000</text><line x1="1794.5" y1="441" x2="1794.5" y2="802.5" stroke="#e4e4e4" stroke-width="1" stroke-dasharray="6 6"/><line x1="1794.5" y1="802.5" x2="1794.5" y2="810.5" stroke="#e4e4e4" stroke-width="1"/><text x="1794.30" y="824.3" text-anchor="middle" fill="#666">10.000</text><path d="M1269.60 501.40H1271.31Q1273.01 501.40 1273.01 503.11V519.69Q1273.01 521.40 1271.31 521.40H1269.60Z" fill="#00cfe8"/><path d="M1269.60 521.40H1272.64Q1275.69 521.40 1275.69 524.44V538.36Q1275.69 541.40 1272.64 541.40H1269.60Z" fill="#ff9f43"/><path d="M1269.60 541.40H1496.63Q1500.63 541.40 1500.63 545.40V557.40Q1500.63 561.40 1496.63 561.40H1269.60Z" fill="#e8525a"/><path d="M1269.60 682.10H1270.18Q1270.75 682.10 1270.75 682.68V701.52Q1270.75 702.10 1270.18 702.10H1269.60Z" fill="#00cfe8"/><path d="M1269.60 702.10H1271.83Q1274.06 702.10 1274.06 704.33V719.87Q1274.06 722.10 1271.83 722.10H1269.60Z" fill="#ff9f43"/><path d="M1269.60 722.10H1763.49Q1767.49 722.10 1767.49 726.10V738.10Q1767.49 742.10 1763.49 742.10H1269.60Z" fill="#e8525a"/><text x="1258.4" y="535.3" text-anchor="end" fill="#666">Proje Koordinasyon Şefliği</text><text x="1258.4" y="716.0" text-anchor="end" fill="#666">Ukome Şefliği</text></svg>
<div class="abs" style="left:325px;top:855px;width:750px;height:15px;background:#fafafa"></div>
<svg class="abs" style="left:325px;top:855px" width="750" height="15" viewBox="0 0 750 15"><path d="M4 7.5L11.5 3.5V11.5Z" fill="#8c8c8c" stroke="#8c8c8c" stroke-width="1" stroke-linejoin="round"/><path d="M746 7.5L738.5 3.5V11.5Z" fill="#8c8c8c" stroke="#8c8c8c" stroke-width="1" stroke-linejoin="round"/><rect x="18" y="3" width="486" height="9" rx="4.5" fill="#8a8a8a"/></svg>
<div class="abs" style="left:325px;top:886px;width:750px;height:28px;display:flex;justify-content:center;gap:9px"><div style="height:28px;border:1px solid #dbdade;border-radius:6px;padding:0 11.8px 0 11.5px;display:flex;align-items:center;font-size:13px;color:#5d5a68;white-space:nowrap;background:#fff;letter-spacing:0px"><span style="display:inline-block;width:8px;height:8px;border-radius:2px;background:#aaa4f3;margin-right:4px"></span>EBYS İşlemleri</div><div style="height:28px;border:1px solid #dbdade;border-radius:6px;padding:0 11.8px 0 11.5px;display:flex;align-items:center;font-size:13px;color:#5d5a68;white-space:nowrap;background:#fff;letter-spacing:0.25px"><span style="display:inline-block;width:8px;height:8px;border-radius:2px;background:#7367f0;margin-right:4px"></span>153 İşlemleri</div></div>
<div class="abs" style="left:1091px;top:855.4px;width:749px;height:28px;display:flex;justify-content:center;gap:9px"><div style="height:28px;border:1px solid #dbdade;border-radius:6px;padding:0 11.8px 0 11.5px;display:flex;align-items:center;font-size:13px;color:#5d5a68;white-space:nowrap;background:#fff;letter-spacing:0.25px"><span style="display:inline-block;width:8px;height:8px;border-radius:2px;background:#00cfe8;margin-right:4px"></span>Başlanmadı</div><div style="height:28px;border:1px solid #dbdade;border-radius:6px;padding:0 11.8px 0 11.5px;display:flex;align-items:center;font-size:13px;color:#5d5a68;white-space:nowrap;background:#fff;letter-spacing:0px"><span style="display:inline-block;width:8px;height:8px;border-radius:2px;background:#ff9f43;margin-right:4px"></span>Devam Ediyor</div><div style="height:28px;border:1px solid #dbdade;border-radius:6px;padding:0 11.8px 0 11.5px;display:flex;align-items:center;font-size:13px;color:#5d5a68;white-space:nowrap;background:#fff;letter-spacing:0.22px"><span style="display:inline-block;width:8px;height:8px;border-radius:2px;background:#e8525a;margin-right:4px"></span>Tamamlandı</div></div>
</div>
</body>
</html>
